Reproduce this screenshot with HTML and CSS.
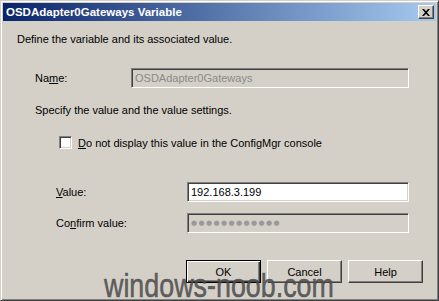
FILE: index.html
```html
<!doctype html>
<html>
<head>
  <title>OSDAdapter0Gateways Variable</title>
  <link rel="stylesheet" href="styles.css">
</head>
<body>
  <div class="window">
    <div class="titlebar">
      <span class="title">OSDAdapter0Gateways Variable</span>
      <span class="close">
        <svg width="8" height="7" viewBox="0 0 8 7">
          <path d="M0 0h2l2 2.2L6 0h2L5 3.5 8 7H6L4 4.8 2 7H0l3-3.5z" fill="#000"/>
        </svg>
      </span>
    </div>

    <div class="content">
      <p class="intro">Define the variable and its associated value.</p>

      <div class="row name-row">
        <span class="label">Na<u>m</u>e:</span>
        <div class="field disabled">OSDAdapter0Gateways</div>
      </div>

      <p class="section">Specify the value and the value settings.</p>

      <div class="check">
        <span class="box"></span>
        <span><u>D</u>o not display this value in the ConfigMgr console</span>
      </div>

      <div class="row value-row">
        <span class="label"><u>V</u>alue:</span>
        <div class="field">192.168.3.199</div>
      </div>

      <div class="row confirm-row">
        <span class="label">Co<u>n</u>firm value:</span>
        <div class="field disabled dots">&#9679;&#9679;&#9679;&#9679;&#9679;&#9679;&#9679;&#9679;&#9679;&#9679;&#9679;&#9679;</div>
      </div>

      <div class="buttons">
        <button class="btn default">OK</button>
        <button class="btn">Cancel</button>
        <button class="btn">Help</button>
      </div>
    </div>

    <div class="watermark">windows-noob.com</div>
  </div>
</body>
</html>
```

FILE: styles.css
```css
html, body {
  margin: 0;
  padding: 0;
  background: #d4d0c8;
}

.window {
  position: relative;
  box-sizing: border-box;
  width: 439px;
  height: 301px;
  padding: 2px;
  background: #d4d0c8;
  border: 1px solid;
  border-color: #d4d0c8 #404040 #404040 #d4d0c8;
  box-shadow: inset 1px 1px #fff, inset -1px -1px #808080;
  font-family: "Liberation Sans", Arial, sans-serif;
  font-size: 11px;
  color: #000;
  overflow: hidden;
}

/* title bar */
.titlebar {
  height: 18px;
  display: flex;
  align-items: center;
  justify-content: space-between;
  padding: 0 2px 0 3px;
  background: linear-gradient(to right, #0a246a, #a6caf0);
}
.title {
  color: #fff;
  font-weight: bold;
  font-size: 11.5px;
}
.close {
  box-sizing: border-box;
  width: 16px;
  height: 14px;
  display: flex;
  align-items: center;
  justify-content: center;
  background: #d4d0c8;
  border: 1px solid;
  border-color: #fff #404040 #404040 #fff;
  box-shadow: inset -1px -1px #808080;
}

/* body */
.content {
  padding: 12px 13px 0 14px;
}
.intro,
.section {
  margin: 0;
  line-height: 13px;
}
.section {
  margin: 16px 0 0 18px;
}

.row {
  display: flex;
  align-items: center;
  height: 20px;
}
.name-row {
  margin: 22px 0 0 18px;
}
.name-row .label {
  width: 96px;
}
.name-row .field {
  width: 278px;
}
.value-row {
  margin: 33px 0 0 39px;
}
.confirm-row {
  margin: 11px 0 0 39px;
}
.value-row .label,
.confirm-row .label {
  width: 131px;
}
.value-row .field,
.confirm-row .field {
  width: 222px;
}

.field {
  box-sizing: border-box;
  height: 20px;
  padding: 0 0 0 3px;
  display: flex;
  align-items: center;
  background: #fff;
  border: 1px solid;
  border-color: #808080 #fff #fff #808080;
  box-shadow: inset 1px 1px #404040, inset -1px -1px #d4d0c8;
}
.field.disabled {
  background: #d4d0c8;
  color: #8a8a8a;
}
.field.dots {
  font-family: "DejaVu Sans", sans-serif;
  font-size: 7px;
  letter-spacing: 1.4px;
  color: #999;
  padding-left: 3px;
}

.check {
  display: flex;
  align-items: center;
  gap: 6px;
  height: 13px;
  margin: 19px 0 0 42px;
}
.box {
  box-sizing: border-box;
  width: 13px;
  height: 13px;
  background: #fff;
  border: 1px solid;
  border-color: #808080 #fff #fff #808080;
  box-shadow: inset 1px 1px #404040, inset -1px -1px #d4d0c8;
}

/* buttons */
.buttons {
  display: flex;
  justify-content: flex-end;
  gap: 6px;
  margin-top: 27px;
}
.btn {
  box-sizing: border-box;
  width: 75px;
  height: 23px;
  padding: 0;
  font-family: "Liberation Sans", Arial, sans-serif;
  font-size: 11px;
  color: #000;
  background: #d4d0c8;
  border: 1px solid;
  border-color: #fff #404040 #404040 #fff;
  box-shadow: inset -1px -1px #808080;
}
.btn.default {
  border: 1px solid #000;
  box-shadow: inset 1px 1px #fff, inset -1px -1px #404040, inset -2px -2px #808080;
}

/* site watermark */
.watermark {
  position: absolute;
  left: 103px;
  top: 267px;
  font-family: "Liberation Sans", Arial, sans-serif;
  font-size: 34px;
  line-height: 34px;
  color: rgba(75, 75, 75, 0.85);
  -webkit-text-stroke: 0.6px rgba(75, 75, 75, 0.85);
  transform: scaleX(0.79);
  transform-origin: left top;
  white-space: nowrap;
}
```
